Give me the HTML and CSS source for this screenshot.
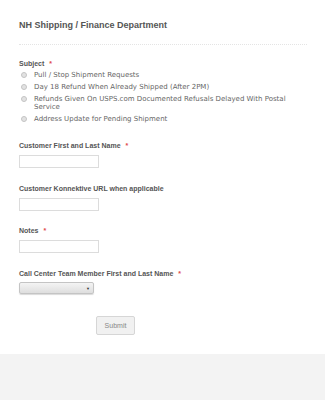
FILE: index.html
```html
<!DOCTYPE html>
<html>
<head>
<meta charset="utf-8">
<link rel="stylesheet" href="styles.css">
</head>
<body>
<div class="page">
  <form class="form">
    <h1 class="title">NH Shipping / Finance Department</h1>
    <div class="divider"></div>

    <div class="field field-subject">
      <div class="label">Subject <span class="req">*</span></div>
      <ul class="options">
        <li class="option"><span class="radio"></span><span class="opt-text">Pull / Stop Shipment Requests</span></li>
        <li class="option"><span class="radio"></span><span class="opt-text">Day 18 Refund When Already Shipped (After 2PM)</span></li>
        <li class="option"><span class="radio"></span><span class="opt-text">Refunds Given On USPS.com Documented Refusals Delayed With Postal Service</span></li>
        <li class="option"><span class="radio"></span><span class="opt-text">Address Update for Pending Shipment</span></li>
      </ul>
    </div>

    <div class="field field-name">
      <div class="label">Customer First and Last Name <span class="req">*</span></div>
      <div class="input"></div>
    </div>

    <div class="field field-url">
      <div class="label">Customer Konnektive URL when applicable</div>
      <div class="input"></div>
    </div>

    <div class="field field-notes">
      <div class="label">Notes <span class="req">*</span></div>
      <div class="input"></div>
    </div>

    <div class="field field-agent">
      <div class="label">Call Center Team Member First and Last Name <span class="req">*</span></div>
      <div class="select"><span class="arrow">&#9660;</span></div>
    </div>

    <div class="actions">
      <button type="button" class="submit">Submit</button>
    </div>
  </form>
  <div class="footer"></div>
</div>
</body>
</html>
```

FILE: styles.css
```css
html, body {
  margin: 0;
  padding: 0;
  background: #f3f3f3;
}
.page {
  width: 325px;
}
.form {
  display: block;
  background: #fff;
  padding: 19px 18px 18px 19px;
  height: 354px;
  box-sizing: border-box;
  font-family: "Liberation Sans", Arial, sans-serif;
  color: #555;
}
.title {
  margin: 0;
  font-size: 9px;
  font-weight: bold;
  line-height: 12px;
  color: #555;
}
.divider {
  margin-top: 13px;
  border-top: 1px dotted #e4e4e4;
  width: 288px;
}
.label {
  font-size: 7px;
  font-weight: bold;
  line-height: 10px;
  color: #555;
}
.req {
  color: #e0494b;
  margin-left: 3px;
}
.field-subject {
  margin-top: 14px;
}
.options {
  list-style: none;
  margin: 2px 0 0 0;
  padding: 0;
}
.option {
  display: flex;
  align-items: flex-start;
  font-family: "DejaVu Sans", Verdana, sans-serif;
  font-size: 7px;
  line-height: 8px;
  color: #666;
  margin-bottom: 4px;
}
.radio {
  flex: none;
  box-sizing: border-box;
  width: 6px;
  height: 6px;
  border-radius: 50%;
  border: 1px solid #c4c4c4;
  background: #e2e2e2;
  margin: 1px 7px 0 2px;
}
.opt-text {
  width: 270px;
}
.field-name {
  margin-top: 18px;
}
.field-url {
  margin-top: 16px;
}
.field-notes {
  margin-top: 15px;
}
.field-agent {
  margin-top: 16px;
}
.input {
  margin-top: 4px;
  width: 80px;
  height: 13px;
  box-sizing: border-box;
  border: 1px solid #dcdcdc;
  background: #fff;
}
.select {
  margin-top: 3px;
  width: 75px;
  height: 12px;
  box-sizing: border-box;
  border: 1px solid #c4c4c4;
  border-radius: 2px;
  background: linear-gradient(#f4f4f4, #dedede);
  box-shadow: 0 1px 1px rgba(0,0,0,0.15);
  display: flex;
  justify-content: flex-end;
  align-items: center;
}
.arrow {
  font-size: 4px;
  color: #333;
  margin-right: 3px;
}
.actions {
  margin-top: 20px;
  padding-left: 77px;
}
.submit {
  width: 39px;
  height: 19px;
  padding: 0;
  font-family: "Liberation Sans", Arial, sans-serif;
  font-size: 7px;
  color: #888;
  background: #f1f1f1;
  border: 1px solid #d6d6d6;
  border-radius: 2px;
}
.footer {
  height: 46px;
  background: #f3f3f3;
}
```
